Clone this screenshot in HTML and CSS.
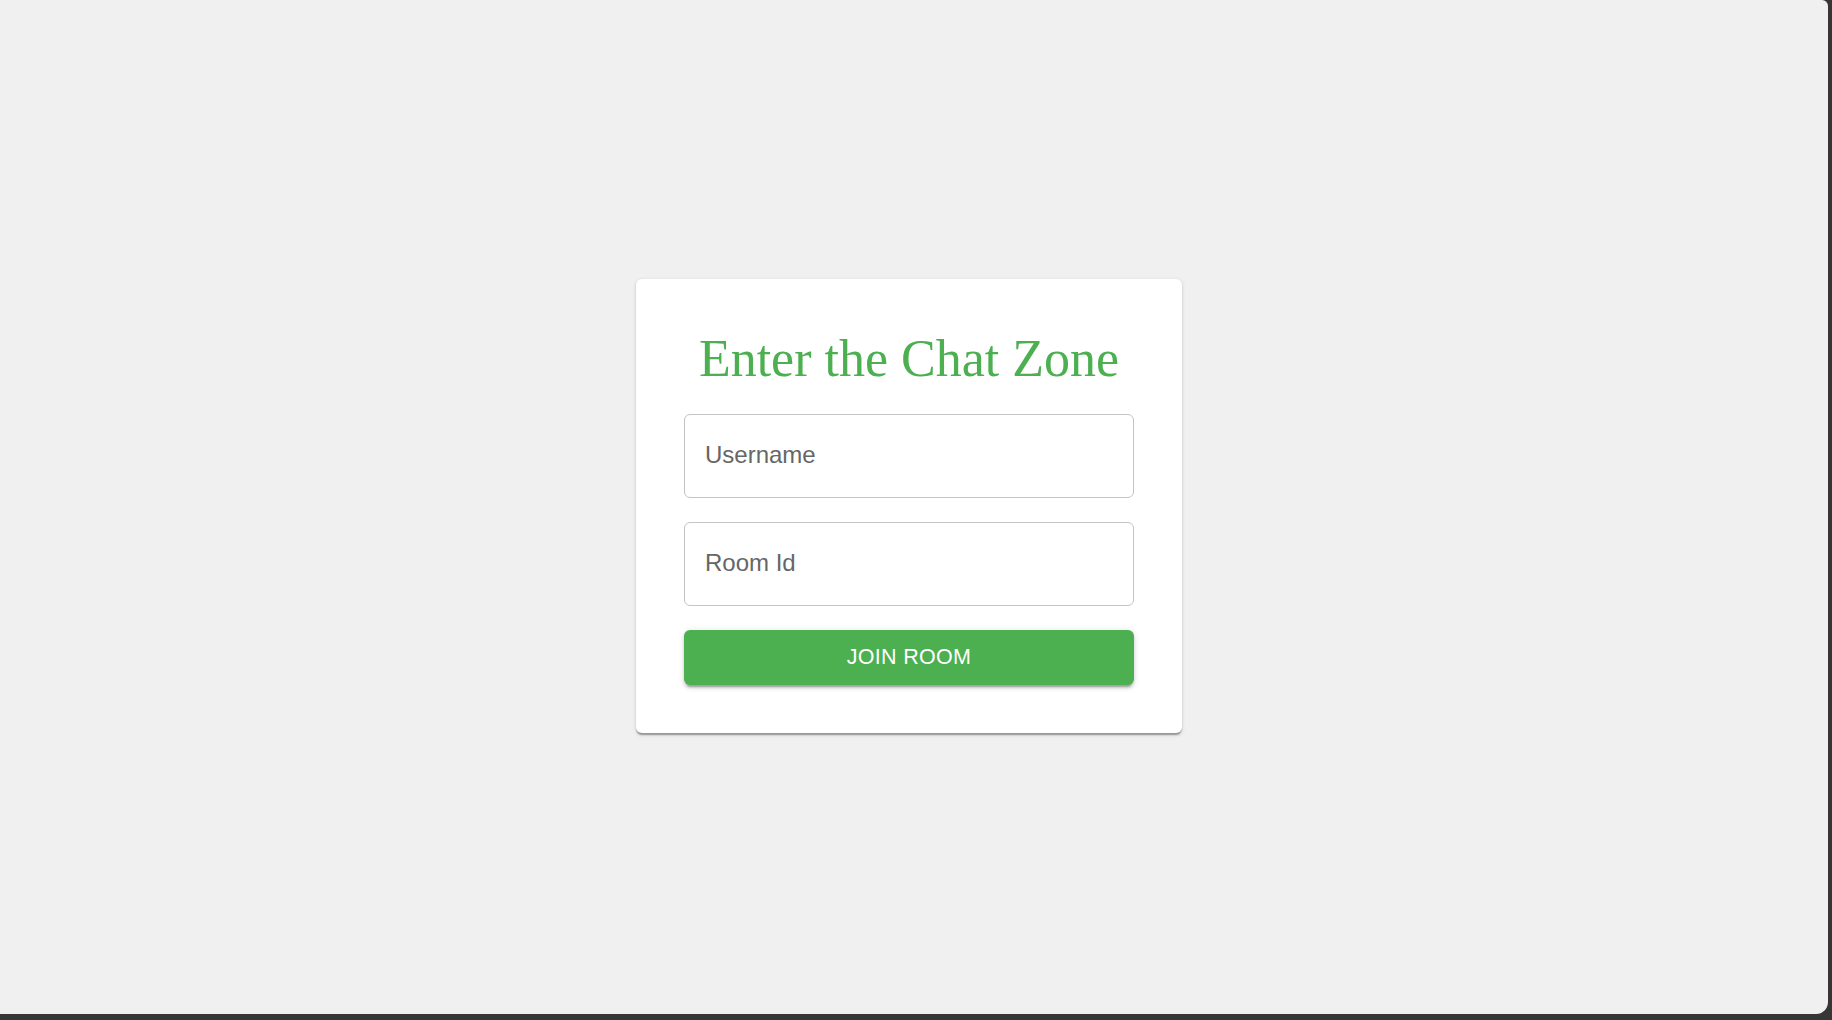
FILE: index.html
```html
<!DOCTYPE html>
<html lang="en">
<head>
<meta charset="utf-8">
<title>Chat Zone</title>
<link rel="stylesheet" href="styles.css">
</head>
<body>
<div class="viewport">
  <main class="card">
    <h1 class="title">Enter the Chat Zone</h1>
    <form class="form">
      <input class="field" type="text" placeholder="Username">
      <input class="field" type="text" placeholder="Room Id">
      <button class="join" type="button">Join Room</button>
    </form>
  </main>
</div>
</body>
</html>
```

FILE: styles.css
```css
html, body {
  margin: 0;
  padding: 0;
}

body {
  background: #363636;
  width: 1832px;
  height: 1020px;
  overflow: hidden;
}

.viewport {
  box-sizing: border-box;
  width: 1828px;
  height: 1014px;
  background: #f0f0f0;
  border-radius: 0 6px 12px 0;
  display: flex;
  align-items: center;
  justify-content: center;
  padding-right: 10px;
  padding-bottom: 2px;
}

.card {
  box-sizing: border-box;
  width: 546px;
  padding: 48px;
  background: #ffffff;
  border-radius: 6px;
  box-shadow: 0 3px 1.5px -1.5px rgba(0, 0, 0, 0.2),
              0 1.5px 1.5px 0 rgba(0, 0, 0, 0.14),
              0 1.5px 4.5px 0 rgba(0, 0, 0, 0.12);
  display: flex;
  flex-direction: column;
}

.title {
  margin: 0 0 24px;
  font-family: "Liberation Serif", "Times New Roman", serif;
  font-weight: 400;
  font-size: 52px;
  line-height: 63px;
  color: #4caf50;
  text-align: center;
}

.form {
  display: flex;
  flex-direction: column;
  gap: 24px;
  margin: 0;
}

.field {
  box-sizing: border-box;
  width: 100%;
  height: 84px;
  margin: 0;
  padding: 0 20px 2px;
  border: 1px solid #c4c4c4;
  border-radius: 6px;
  background: #ffffff;
  font-family: "Liberation Sans", Arial, sans-serif;
  font-size: 24px;
  color: #222;
  outline: none;
}

.field::placeholder {
  color: #666666;
  opacity: 1;
}

.join {
  box-sizing: border-box;
  width: 100%;
  height: 55px;
  margin: 0;
  padding: 0;
  border: none;
  border-radius: 6px;
  background: #4caf50;
  color: #ffffff;
  font-family: "Liberation Sans", Arial, sans-serif;
  font-size: 21.5px;
  letter-spacing: 0.3px;
  text-transform: uppercase;
  cursor: pointer;
  box-shadow: 0 4.5px 1.5px -3px rgba(0, 0, 0, 0.2),
              0 3px 3px 0 rgba(0, 0, 0, 0.14),
              0 1.5px 7.5px 0 rgba(0, 0, 0, 0.12);
}
```
